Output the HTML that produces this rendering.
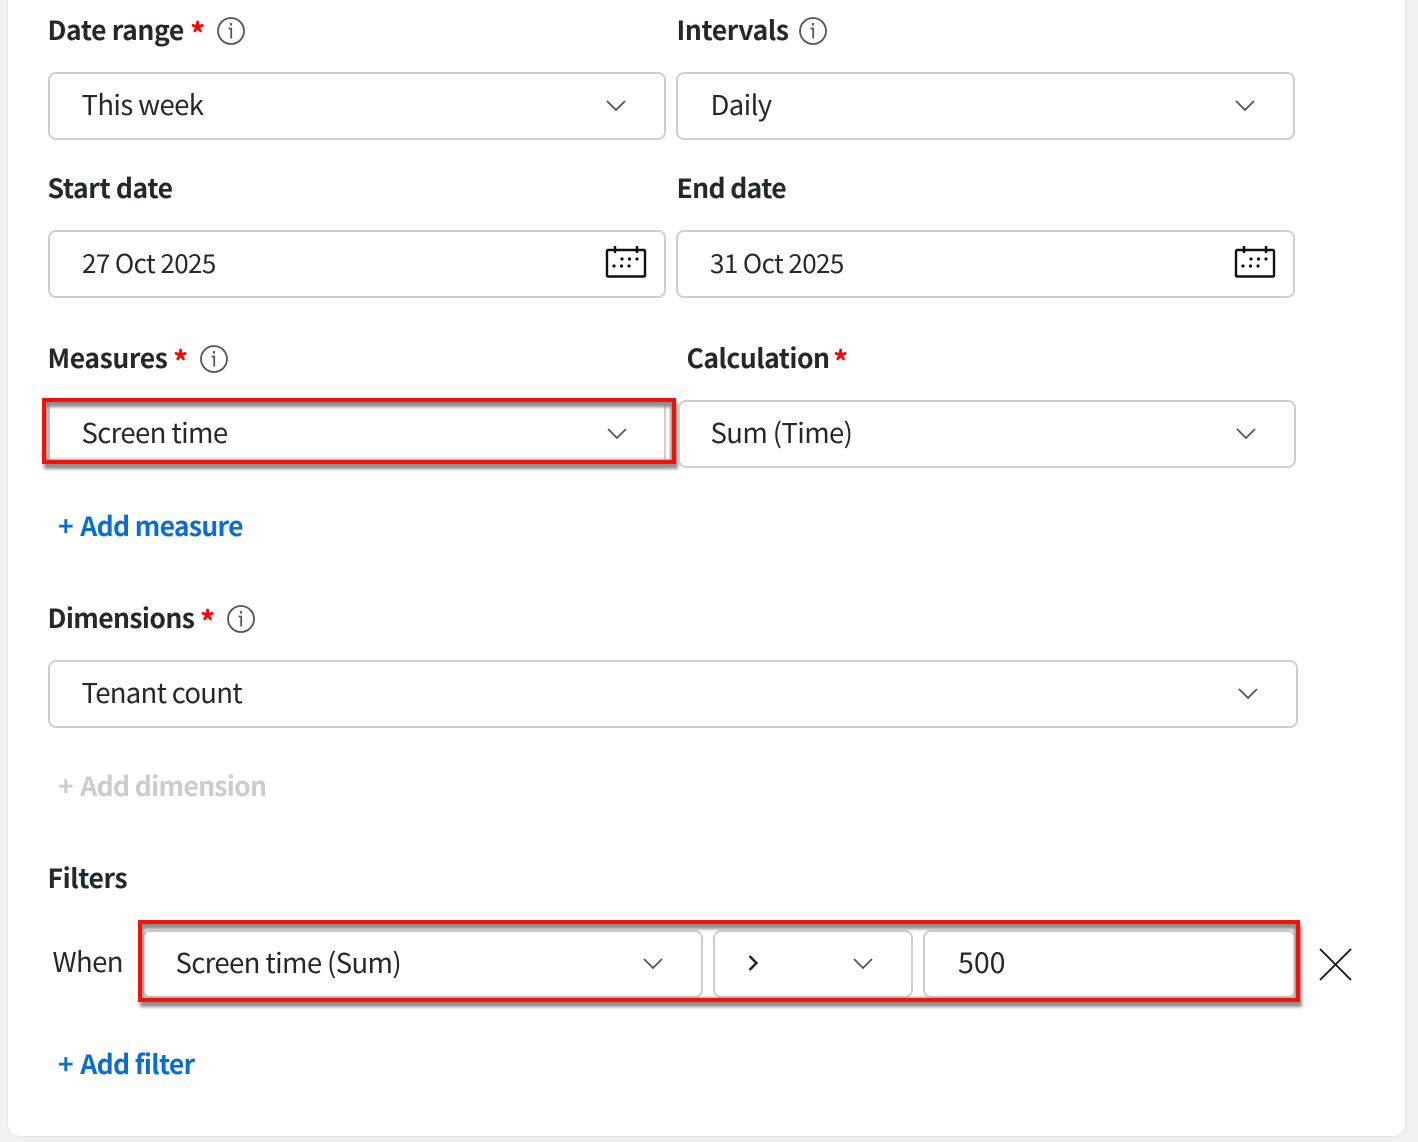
<!DOCTYPE html>
<html><head><meta charset="utf-8"><style>
html,body{margin:0;padding:0;background:#f1f1f1;}
body{width:1418px;height:1142px;position:relative;overflow:hidden;font-family:"Noto Sans CJK KR","Liberation Sans",sans-serif;color:#25282b;}
#card{position:absolute;left:8px;top:-20px;width:1397px;height:1156px;background:#fff;border-radius:12px;box-shadow:0 0 3px #ddd;}
.t{position:absolute;white-space:nowrap;line-height:40px;height:40px;}
.l{font-size:26.500px;font-weight:700;letter-spacing:-.38px;margin:-1px 0 0 -.5px;}
.v{font-size:27.500px;font-weight:400;letter-spacing:-.62px;margin:-2px 0 0 -.5px;}
.d{font-size:26px;font-weight:400;letter-spacing:-.6px;}
.a{font-size:26.500px;font-weight:700;letter-spacing:-.68px;color:#0a6ed1;margin-top:-1px;}
.a b{margin-right:2px;font-weight:700;}
.s{position:absolute;white-space:nowrap;line-height:40px;height:40px;color:#f00;font-weight:700;font-size:30px;}
.b{position:absolute;box-sizing:border-box;height:68px;border:2px solid #cfcfcf;border-radius:8px;background:#fff;}
.r{position:absolute;box-sizing:border-box;border:4px solid #f5100a;box-shadow:2px 5px 3px #8f8f8f, inset 3px 6px 3px -1px #8c8c8c, inset -3px -2px 2px -1px #a0a0a0;}
svg{position:absolute;overflow:visible;}
</style></head><body>
<div id="card"></div>

<div class="t l" style="left:48px;top:10px">Date range</div>
<div class="s" style="left:190px;top:12px">*</div>
<div class="t l" style="left:677px;top:10px">Intervals</div>
<svg style="left:217px;top:17px" width="28" height="28" viewBox="0 0 28 28" fill="none" stroke="#555" stroke-width="1.800"><circle cx="14" cy="14" r="13"/><path d="M11.500 11.500h2.700v10M14 6v2.600"/></svg>
<svg style="left:799px;top:17px" width="28" height="28" viewBox="0 0 28 28" fill="none" stroke="#555" stroke-width="1.800"><circle cx="14" cy="14" r="13"/><path d="M11.500 11.500h2.700v10M14 6v2.600"/></svg>

<div class="b" style="left:48px;top:72px;width:618px"></div>
<div class="t v" style="left:82px;top:85px">This week</div>
<svg style="left:606px;top:99px" width="20" height="14" fill="none" stroke="#555" stroke-width="1.800"><path d="M1 2l9 9 9-9"/></svg>
<div class="b" style="left:676px;top:72px;width:619px"></div>
<div class="t v" style="left:711px;top:85px">Daily</div>
<svg style="left:1235px;top:99px" width="20" height="14" fill="none" stroke="#555" stroke-width="1.800"><path d="M1 2l9 9 9-9"/></svg>

<div class="t l" style="left:48px;top:168px">Start date</div>
<div class="t l" style="left:677px;top:168px;letter-spacing:-.65px">End date</div>
<div class="b" style="left:48px;top:230px;width:618px"></div>
<div class="t d" style="left:82px;top:243px">27 Oct 2025</div>
<svg style="left:606px;top:246px" width="40" height="32" viewBox="0 0 40 32" fill="none" stroke="#111" stroke-width="2.400"><rect x="1" y="4" width="38" height="26.500" rx="1"/><path d="M9 0v7M31 0v7"/><g fill="#111" stroke="none"><circle cx="16" cy="13" r="1.600"/><circle cx="23.500" cy="13" r="1.600"/><circle cx="31" cy="13" r="1.600"/><circle cx="8" cy="20" r="1.600"/><circle cx="15.500" cy="20" r="1.600"/><circle cx="23" cy="20" r="1.600"/></g></svg>
<div class="b" style="left:676px;top:230px;width:619px"></div>
<div class="t d" style="left:710px;top:243px">31 Oct 2025</div>
<svg style="left:1235px;top:246px" width="40" height="32" viewBox="0 0 40 32" fill="none" stroke="#111" stroke-width="2.400"><rect x="1" y="4" width="38" height="26.500" rx="1"/><path d="M9 0v7M31 0v7"/><g fill="#111" stroke="none"><circle cx="16" cy="13" r="1.600"/><circle cx="23.500" cy="13" r="1.600"/><circle cx="31" cy="13" r="1.600"/><circle cx="8" cy="20" r="1.600"/><circle cx="15.500" cy="20" r="1.600"/><circle cx="23" cy="20" r="1.600"/></g></svg>

<div class="t l" style="left:48px;top:338px">Measures</div>
<div class="s" style="left:173px;top:340px">*</div>
<svg style="left:200px;top:345px" width="28" height="28" viewBox="0 0 28 28" fill="none" stroke="#555" stroke-width="1.800"><circle cx="14" cy="14" r="13"/><path d="M11.500 11.500h2.700v10M14 6v2.600"/></svg>
<div class="t l" style="left:687px;top:338px;letter-spacing:-.5px">Calculation</div>
<div class="s" style="left:833px;top:340px">*</div>

<div class="b" style="left:48px;top:400px;width:618px"></div>
<div class="t v" style="left:82px;top:413px">Screen time</div>
<svg style="left:607px;top:427px" width="20" height="14" fill="none" stroke="#555" stroke-width="1.800"><path d="M1 2l9 9 9-9"/></svg>
<div class="r" style="left:42px;top:398px;width:634px;height:66px"></div>
<div class="b" style="left:678px;top:400px;width:618px"></div>
<div class="t v" style="left:711px;top:413px">Sum (Time)</div>
<svg style="left:1236px;top:427px" width="20" height="14" fill="none" stroke="#555" stroke-width="1.800"><path d="M1 2l9 9 9-9"/></svg>

<div class="t a" style="left:58px;top:506px"><b>+</b> Add measure</div>

<div class="t l" style="left:48px;top:598px;letter-spacing:-.6px">Dimensions</div>
<div class="s" style="left:200px;top:600px">*</div>
<svg style="left:227px;top:605px" width="28" height="28" viewBox="0 0 28 28" fill="none" stroke="#555" stroke-width="1.800"><circle cx="14" cy="14" r="13"/><path d="M11.500 11.500h2.700v10M14 6v2.600"/></svg>
<div class="b" style="left:48px;top:660px;width:1250px"></div>
<div class="t v" style="left:82px;top:673px;letter-spacing:-.72px">Tenant count</div>
<svg style="left:1238px;top:687px" width="20" height="14" fill="none" stroke="#555" stroke-width="1.800"><path d="M1 2l9 9 9-9"/></svg>

<div class="t a" style="left:58px;top:766px;color:#ccc"><b>+</b> Add dimension</div>

<div class="t l" style="left:48px;top:858px">Filters</div>
<div class="t v" style="left:53px;top:942px">When</div>

<div class="b" style="left:142px;top:930px;width:561px"></div>
<div class="t v" style="left:176px;top:943px">Screen time (Sum)</div>
<svg style="left:643px;top:957px" width="20" height="14" fill="none" stroke="#555" stroke-width="1.800"><path d="M1 2l9 9 9-9"/></svg>
<div class="b" style="left:713px;top:930px;width:200px"></div>
<svg style="left:748px;top:955px" width="12" height="16" fill="none" stroke="#222" stroke-width="2.400"><path d="M1.500 1l7 7-7 7"/></svg>
<svg style="left:853px;top:957px" width="20" height="14" fill="none" stroke="#555" stroke-width="1.800"><path d="M1 2l9 9 9-9"/></svg>
<div class="b" style="left:923px;top:930px;width:373px"></div>
<div class="t v" style="left:958px;top:943px;font-size:28.500px;letter-spacing:0;margin:-1px 0 0 0">500</div>
<div class="r" style="left:138px;top:920px;width:1162px;height:82px"></div>
<svg style="left:1319px;top:948px" width="33" height="33" fill="none" stroke="#111" stroke-width="1.800"><path d="M1 1l31 31M32 1L1 32"/></svg>

<div class="t a" style="left:58px;top:1044px"><b>+</b> Add filter</div>
</body></html>
